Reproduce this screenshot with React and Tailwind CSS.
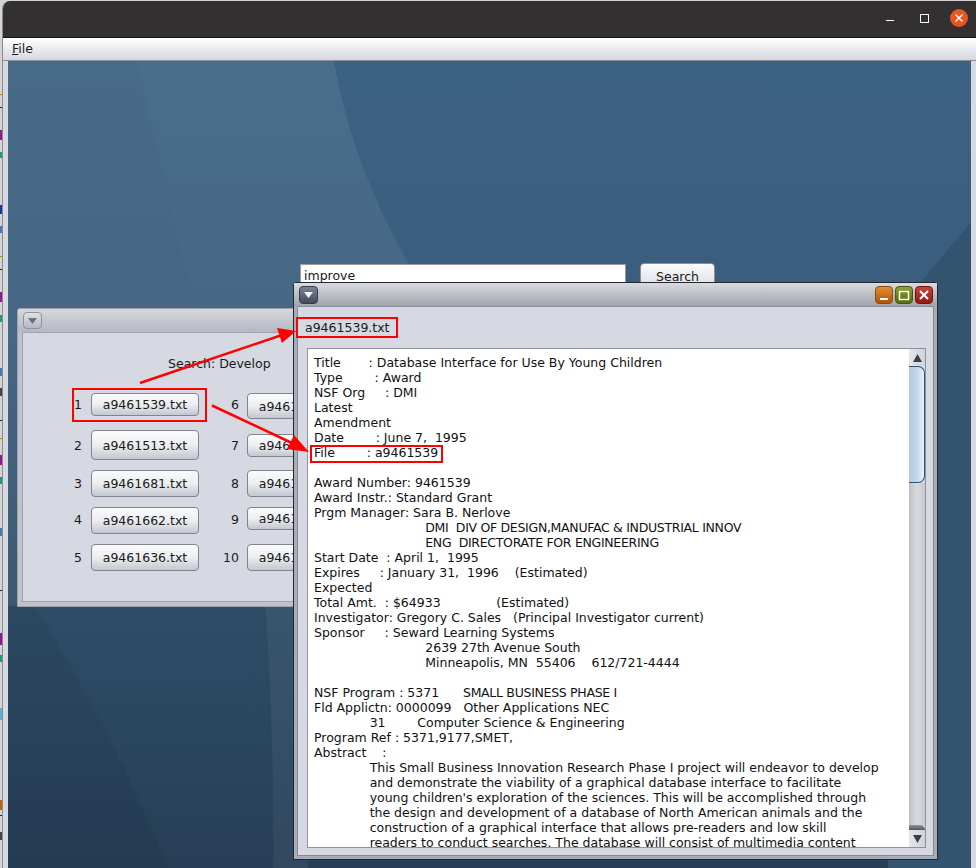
const docLines = `Title       : Database Interface for Use By Young Children
Type        : Award
NSF Org     : DMI
Latest
Amendment
Date        : June 7,  1995
File        : a9461539

Award Number: 9461539
Award Instr.: Standard Grant
Prgm Manager: Sara B. Nerlove
                            DMI  DIV OF DESIGN,MANUFAC & INDUSTRIAL INNOV
                            ENG  DIRECTORATE FOR ENGINEERING
Start Date  : April 1,  1995
Expires     : January 31,  1996    (Estimated)
Expected
Total Amt.  : $64933              (Estimated)
Investigator: Gregory C. Sales   (Principal Investigator current)
Sponsor     : Seward Learning Systems
                            2639 27th Avenue South
                            Minneapolis, MN  55406    612/721-4444

NSF Program : 5371      SMALL BUSINESS PHASE I
Fld Applictn: 0000099   Other Applications NEC
              31        Computer Science & Engineering
Program Ref : 5371,9177,SMET,
Abstract    :
              This Small Business Innovation Research Phase I project will endeavor to develop
              and demonstrate the viability of a graphical database interface to facilitate
              young children's exploration of the sciences. This will be accomplished through
              the design and development of a database of North American animals and the
              construction of a graphical interface that allows pre-readers and low skill
              readers to conduct searches. The database will consist of multimedia content`.split("\n");

const resultRows = [
  { rowClass: "h-[37px]", numClass: "pt-[0px]", a: "1", aName: "a9461539.txt", aBtn: "h-[23px]", b: "6", bName: "a9461540.txt", bBtn: "h-[26px]" },
  { rowClass: "h-[40px]", numClass: "pt-[4px]", a: "2", aName: "a9461513.txt", aBtn: "h-[30px]", b: "7", bName: "a9461621.txt", bBtn: "mt-[4px] h-[23px]" },
  { rowClass: "h-[37px]", numClass: "pt-[2px]", a: "3", aName: "a9461681.txt", aBtn: "h-[27px]", b: "8", bName: "a9461644.txt", bBtn: "h-[27px]" },
  { rowClass: "h-[37px]", numClass: "pt-[1px]", a: "4", aName: "a9461662.txt", aBtn: "h-[27px]", b: "9", bName: "a9461670.txt", bBtn: "h-[23px]" },
  { rowClass: "h-[27px]", numClass: "pt-[2px]", a: "5", aName: "a9461636.txt", aBtn: "h-[27px]", b: "10", bName: "a9461602.txt", bBtn: "h-[27px]" },
];

// specks of the window behind, showing at the left edge
const edgeSpecks = [
  [94, 1, "#b8860b"], [107, 1, "#222"], [130, 10, "#8b1a8b"], [152, 6, "#1e9a7a"], [205, 9, "#1a3a8a"], [226, 7, "#4a78b0"],
  [256, 1, "#b8860b"], [269, 1, "#222"], [292, 10, "#8b1a8b"], [315, 7, "#1e9a7a"], [368, 8, "#4a78b0"], [388, 8, "#444"],
  [420, 1, "#222"], [438, 1, "#b8860b"], [455, 10, "#8b1a8b"], [477, 7, "#1e9a7a"], [528, 8, "#4a78b0"], [590, 1, "#222"],
  [633, 12, "#8b1a8b"], [655, 7, "#1e9a7a"], [708, 12, "#5ab0d0"], [800, 10, "#b8660b"], [815, 1, "#222"], [832, 8, "#444"],
];

function FileButton({ name, className }) {
  return (
    <button className={`w-[108px] shrink-0 rounded-[4px] border border-[#7f8590] bg-gradient-to-b from-[#fbfbfc] via-[#eceef1] to-[#c3c7cf] pt-[2px] text-[12.500px] text-[#1a1a1a] ${className}`}>
      {name}
    </button>
  );
}

function ResultRow({ row }) {
  return (
    <div className={`flex items-start ${row.rowClass}`}>
      <span className={`w-[68px] shrink-0 pr-[9px] text-right text-[12.500px] leading-[23px] ${row.numClass}`}>{row.a}</span>
      <FileButton name={row.aName} className={row.aBtn} />
      <span className={`w-[48px] shrink-0 pr-[8px] text-right text-[12.500px] leading-[23px] ${row.numClass}`}>{row.b}</span>
      <FileButton name={row.bName} className={row.bBtn} />
    </div>
  );
}

function TitleButton({ from, to, border, children }) {
  return (
    <div className={`flex h-[18px] w-[18px] items-center justify-center rounded-[4px] border bg-gradient-to-b ${from} ${to} ${border}`}>
      <svg width="12" height="12" viewBox="0 0 12 12" fill="none" stroke="#fff" strokeWidth="2">
        {children}
      </svg>
    </div>
  );
}

function LeftFrame() {
  return (
    <div className="absolute left-[9px] top-[247px] flex h-[299px] w-[300px] flex-col overflow-hidden rounded-t-[3px] border border-[#9da1ab] bg-[#bfc3cc]">
      <div className="flex h-[23px] shrink-0 items-center bg-gradient-to-b from-[#d6d8de] to-[#b4b8c1] pl-[5px]">
        <div className="flex h-[17px] w-[19px] items-center justify-center rounded-[4px] border border-[#8f939c] bg-gradient-to-b from-[#dfe1e6] to-[#b5b9c2]">
          <svg width="9" height="6" viewBox="0 0 9 6"><path d="M0 0h9L4.500 6z" fill="#6b6f78" /></svg>
        </div>
      </div>
      <div className="mx-[4px] mb-[4px] flex-1 overflow-hidden border border-[#9fa3ad] bg-[#d6d9e1] pt-[23px] text-[#1a1a1a]">
        <p className="pl-[145px] text-[12.500px] leading-[15px]">Search: Develop</p>
        <div className="mt-[22px]">
          {resultRows.map((row) => <ResultRow key={row.a} row={row} />)}
        </div>
      </div>
    </div>
  );
}

function DocLine({ line }) {
  // capitals run wider here than in the picture, so those stretches get tightened
  const caps = line.match(/^(.*?)(DMI  DIV.*|ENG  DIR.*|SMALL BUS.*)$/);
  return (
    <span className="block h-[15px]">
      {caps ? <>{caps[1]}<span className="tracking-[-0.3px]">{caps[2]}</span></> : line}
    </span>
  );
}

function DocFrame() {
  return (
    <div className="absolute left-[285px] top-[221px] flex h-[578px] w-[645px] flex-col rounded-t-[3px] border border-[#23272e] bg-[#a9adb8]">
      <div className="flex h-[23px] shrink-0 items-center justify-between bg-gradient-to-b from-[#d9dbe0] to-[#a0a4ad] pl-[5px] pr-[4px]">
        <div className="flex h-[18px] w-[19px] items-center justify-center rounded-[4px] border border-[#353a48] bg-gradient-to-b from-[#7c8396] to-[#444b5e]">
          <svg width="9" height="6" viewBox="0 0 9 6"><path d="M0 0h9L4.500 6z" fill="#f4f5f7" /></svg>
        </div>
        <div className="flex gap-[2px]">
          <TitleButton from="from-[#e08c35]" to="to-[#b25606]" border="border-[#8a4a12]">
            <path d="M2 10h8" />
          </TitleButton>
          <TitleButton from="from-[#8ba032]" to="to-[#566c10]" border="border-[#47590f]">
            <path d="M1.500 2.500h9v8h-9z" strokeWidth="1.500" />
          </TitleButton>
          <TitleButton from="from-[#c8443a]" to="to-[#941a12]" border="border-[#70140e]">
            <path d="M2 2l8 8M10 2l-8 8" />
          </TitleButton>
        </div>
      </div>
      <div className="mx-[3px] mb-[3px] flex min-h-0 flex-1 flex-col border border-[#868a94] bg-[#d6d9e1] text-[#1a1a1a]">
        <p className="h-[41px] shrink-0 pl-[7px] pt-[13px] text-[12.500px] leading-[15px]">a9461539.txt</p>
        <div className="mb-[7px] ml-[9px] mr-[7px] flex min-h-0 flex-1 border border-[#8e929c] bg-white">
          <pre className="min-w-0 flex-1 overflow-hidden pl-[6px] pt-[6px] font-['DejaVu_Sans',sans-serif] text-[12.500px] leading-[15px] text-[#111]">
            {docLines.map((line, i) => <DocLine key={i} line={line} />)}
          </pre>
          <ScrollBar />
        </div>
      </div>
    </div>
  );
}

function ScrollBar() {
  return (
    <div className="flex w-[16px] shrink-0 flex-col bg-[#d6d9e1]">
      <div className="flex h-[17px] shrink-0 items-center justify-center bg-gradient-to-r from-[#e4e6ea] to-[#cfd2d9]">
        <svg width="9" height="8" viewBox="0 0 9 8"><path d="M4.500 0L9 8H0z" fill="#3c3f46" /></svg>
      </div>
      <div className="h-[117px] shrink-0 rounded-r-[7px] border-y border-r border-[#2f506e] bg-gradient-to-r from-[#b3c9de] via-[#c3d6e8] to-[#e6f3fa]" />
      <div className="flex-1 bg-gradient-to-r from-[#bfc1c7] via-[#d8dadf] to-[#c6c8ce]" />
      <div className="h-[5px] shrink-0 rounded-tr-[8px] bg-gradient-to-b from-[#8f9299] to-[#54565c]" />
      <div className="flex h-[17px] shrink-0 items-center justify-center bg-gradient-to-r from-[#e4e6ea] to-[#cfd2d9]">
        <svg width="9" height="8" viewBox="0 0 9 8"><path d="M0 0h9L4.500 8z" fill="#3c3f46" /></svg>
      </div>
    </div>
  );
}

export default function App() {
  return (
    <div className="relative flex h-[868px] w-[976px] overflow-hidden bg-[#d4d4d4] font-['DejaVu_Sans',sans-serif]">
      {/* window behind, only its edge shows */}
      <svg className="h-[868px] w-[2px] shrink-0" viewBox="0 0 2 868">
        {edgeSpecks.map(([y, h, color]) => <rect key={y} x="0" y={y} width="2" height={h} fill={color} />)}
      </svg>

      <div className="mt-px flex min-w-0 flex-1 flex-col overflow-hidden rounded-tl-[8px] border-l border-[#8b8b8b]">
        <div className="relative h-[37px] shrink-0 border-b border-[#111] bg-[#323030]">
          <div className="flex h-full items-center justify-end pr-[8px] pb-[2px]">
            <div className="mr-[26px] mt-[5px] h-[1px] w-[8px] bg-white" />
            <div className="mr-[21px] h-[9px] w-[9px] border border-white" />
            <div className="flex h-[18px] w-[18px] items-center justify-center rounded-full bg-[#e95420]">
              <svg width="10" height="10" viewBox="0 0 10 10" stroke="#fff" strokeWidth="1.500"><path d="M1.500 1.500l7 7M8.500 1.500l-7 7" /></svg>
            </div>
          </div>
        </div>

        <div className="flex h-[23px] shrink-0 items-center border-b border-[#8c8f96] bg-gradient-to-b from-white to-[#d5d8e0] pl-[9px] text-[12.500px] text-[#1c1c1c]">
          <span><span className="underline">F</span>ile</span>
        </div>

        <div className="flex min-h-0 flex-1">
          <div className="w-[5px] shrink-0 bg-[#d6d9e2]" />
          <div className="relative min-w-0 flex-1 overflow-hidden bg-gradient-to-b from-[#3c6283] via-[#3a5d7c] via-30% to-[#263f56]">
            {/* wallpaper waves */}
            <svg className="absolute inset-0" width="963" height="807" viewBox="0 0 963 807">
              <path d="M0 0H326C340 80 370 150 400 201L300 545H0z" fill="#fff" fillOpacity="0.07" />
              <path d="M0 0H129C145 70 165 140 185 250H0z" fill="#000" fillOpacity="0.012" />
              <path d="M27 545C80 630 125 720 160 807H0V545z" fill="#000" fillOpacity="0.05" />
              <path d="M257 540C264 640 266 730 265 807H300V540z" fill="#fff" fillOpacity="0.05" />
              <path d="M963 161L913 221L880 270V807H963z" fill="#33536f" />
            </svg>

            <LeftFrame />

            <div className="absolute left-[292px] top-[203px] h-[30px] w-[326px] border border-[#9a9a9a] bg-white pl-[3px] pt-[2px] text-[12.500px] leading-[17px] text-[#1a1a1a]">improve</div>
            <button className="absolute left-[632px] top-[202px] h-[30px] w-[75px] rounded-[4px] border border-[#8a8f99] bg-gradient-to-b from-[#fbfbfc] to-[#d5d8de] pb-[4px] text-[12.500px] leading-[15px] text-[#1a1a1a]">Search</button>

            <DocFrame />
          </div>
          <div className="w-[5px] shrink-0 bg-[#d6d9e2]" />
        </div>
      </div>

      {/* red annotations drawn over the screenshot */}
      <svg className="pointer-events-none absolute inset-0" width="976" height="868" viewBox="0 0 976 868">
        <g fill="none" stroke="#ff0000" strokeWidth="2">
          <rect x="73" y="389" width="133" height="32" />
          <rect x="297" y="318" width="100" height="19" />
          <rect x="311" y="446" width="131" height="16" />
          <path d="M140 383L282 335M212 405.500L294 444" strokeWidth="2.500" />
        </g>
        <path d="M296 331L277 328L282 343z" fill="#ff0000" />
        <path d="M309 452L294 435L287 449z" fill="#ff0000" />
      </svg>
    </div>
  );
}
